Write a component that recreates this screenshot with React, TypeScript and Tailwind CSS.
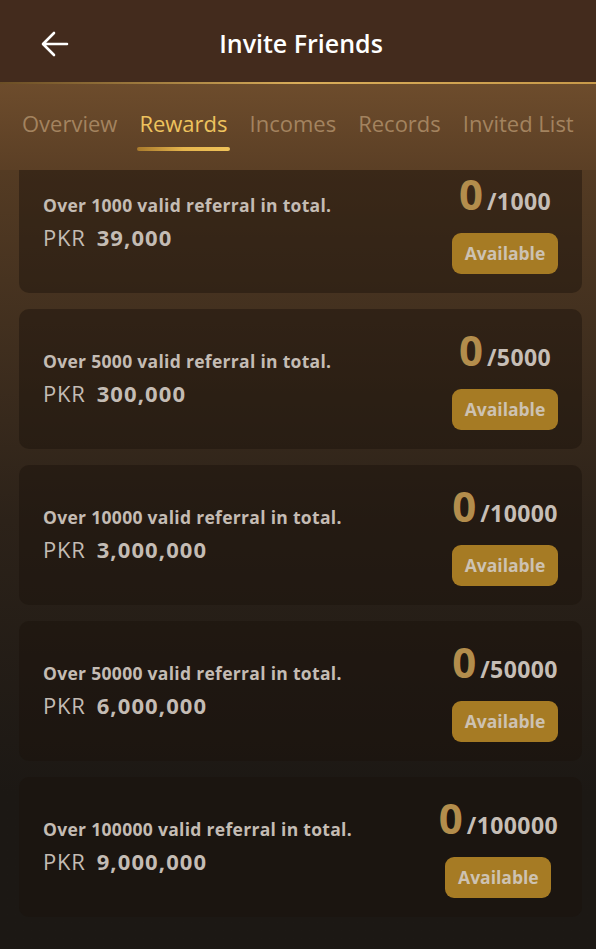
import React from "react";

const rewards = [
  { n: "1000", amt: "39,000" },
  { n: "5000", amt: "300,000" },
  { n: "10000", amt: "3,000,000" },
  { n: "50000", amt: "6,000,000" },
  { n: "100000", amt: "9,000,000" },
];

const tabs = ["Overview", "Rewards", "Incomes", "Records", "Invited List"];

export default function App() {
  return (
    <div
      className="w-[596px] h-[949px] overflow-hidden flex flex-col bg-[#1c1814]"
      style={{ fontFamily: '"Open Sans", "Noto Sans", sans-serif' }}
    >
      <header className="h-[82px] shrink-0 bg-[#432b1d] flex items-center relative">
        <button className="absolute left-[40px] top-[29px] w-[30px] h-[30px] flex items-center justify-center">
          <svg width="28" height="26" viewBox="0 0 28 26" fill="none">
            <path d="M26 13H3M13 2L2 13l11 11" stroke="white" strokeWidth="2.6" strokeLinecap="round" strokeLinejoin="round" />
          </svg>
        </button>
        <h1 className="w-full text-center pl-[6px] pt-[5px] text-white text-[25px] font-semibold">Invite Friends</h1>
      </header>
      <div className="h-[2px] shrink-0 bg-gradient-to-r from-[#6b4e26] via-[#d9ad5a] to-[#c89a4a]" />
      <nav className="h-[86px] shrink-0 bg-gradient-to-b from-[#6d4c2c] to-[#5b3f25] flex items-start pl-[22px] gap-[22px] pt-[21px]">
        {tabs.map((t) => (
          <div key={t} className="flex flex-col items-stretch">
            <span
              className={
                "text-[22px] leading-[36px] font-medium " +
                (t === "Rewards" ? "text-[#eec35e]" : "text-[#a3835f]")
              }
            >
              {t}
            </span>
            {t === "Rewards" && (
              <div className="mt-[6px] -mx-[2px] h-[4px] rounded-full bg-gradient-to-r from-[#a87a2c] via-[#e6b54d] to-[#f0c35a]" />
            )}
          </div>
        ))}
      </nav>
      <div className="flex-1 overflow-hidden bg-gradient-to-b from-[#543b23] via-[#2c2219] via-45% to-[#1c1814] to-80%">
        <div className="mt-[-17px] pl-[19px] pr-[14px] flex flex-col gap-[16px]">
          {rewards.map((r) => (
            <div
              key={r.n}
              className="h-[140px] rounded-[10px] bg-[#1a120c]/45 flex items-start justify-between pl-[24px] pr-[24px]"
            >
              <div className="self-center -mt-[4px] flex flex-col text-[#c4bcb4]">
                <div className="text-[17.5px] font-bold leading-[26px] tracking-[0.3px]">
                  Over {r.n} valid referral in total.
                </div>
                <div className="mt-[5px] flex items-baseline text-[22px] leading-[28px]">
                  <span className="font-normal tracking-[0.8px]">PKR</span>
                  <span className="ml-[11px] font-bold tracking-[1.1px]">{r.amt}</span>
                </div>
              </div>
              <div className="flex flex-col items-center pt-[23px]">
                <div className="flex items-baseline h-[36px] leading-[36px]">
                  <span className="inline-block h-[36px] leading-[36px] text-[42px] font-bold text-[#b38d4c]">0</span>
                  <span className="ml-[4px] text-[23px] font-bold text-[#c6beb6] tracking-[0.4px]">/{r.n}</span>
                </div>
                <div className="mt-[21px] w-[106px] h-[41px] rounded-[9px] bg-[#a67b24] flex items-center justify-center text-[17.5px] font-bold text-[#cdc2b2]">
                  Available
                </div>
              </div>
            </div>
          ))}
        </div>
      </div>
    </div>
  );
}
